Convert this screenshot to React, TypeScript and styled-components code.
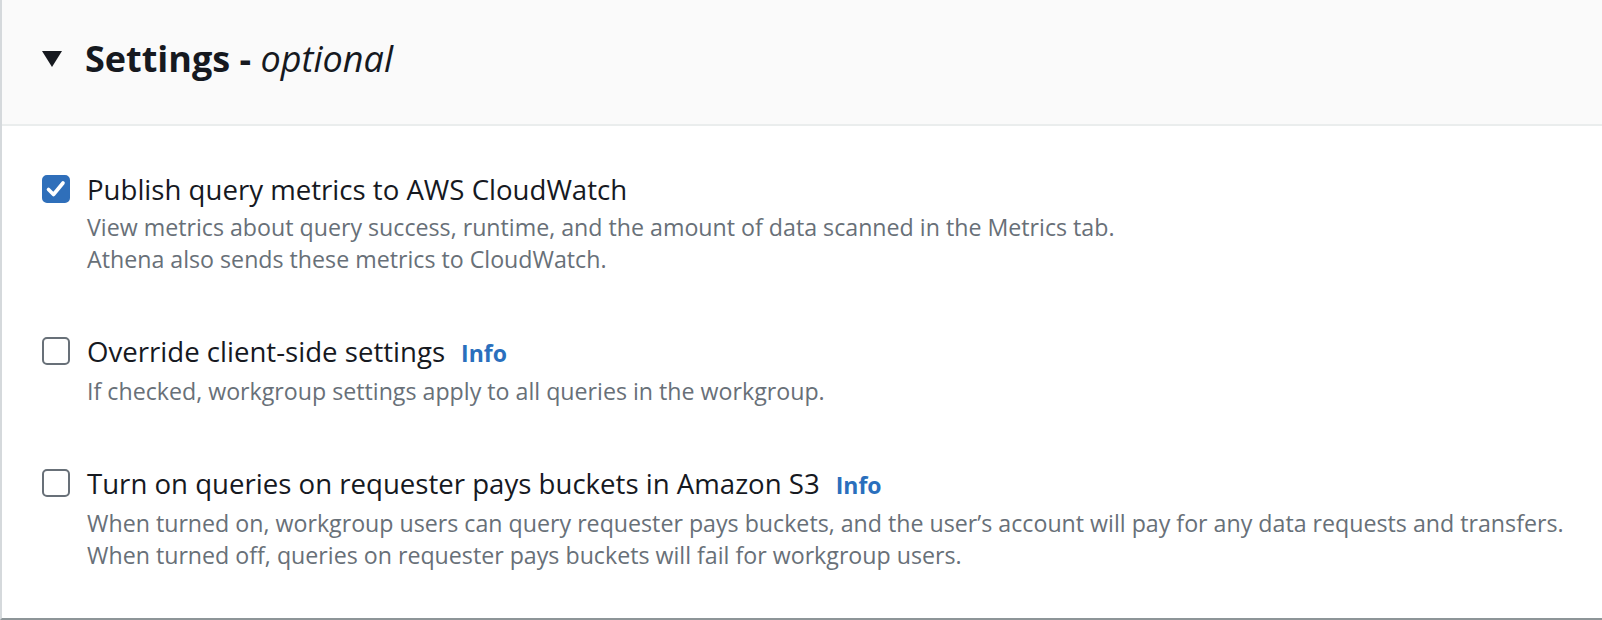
import React from "react";
import styled, { createGlobalStyle } from "styled-components";

const GlobalStyle = createGlobalStyle`
  html, body { margin: 0; padding: 0; background: #ffffff; }
  body { font-family: "Open Sans", "Noto Sans", sans-serif; color: #16191f; }
`;

const Container = styled.section`
  box-sizing: border-box;
  width: 100%;
  height: 620px;
  border-left: 2px solid #d5d9dc;
  border-bottom: 2px solid #8d9598;
  background: #ffffff;
  display: flex;
  flex-direction: column;
`;

const Header = styled.header`
  box-sizing: border-box;
  height: 126px;
  background: #fafafa;
  border-bottom: 2px solid #eaeded;
  display: flex;
  align-items: center;
  padding: 0 0 6px 40px;
  gap: 23px;
`;

const Caret = styled.svg`
  width: 20px;
  height: 16px;
  flex: none;
`;

const Heading = styled.h2`
  margin: 0;
  font-size: 36px;
  font-weight: 700;
  line-height: 44px;
  color: #16191f;
`;

const Optional = styled.em`
  font-weight: 400;
  font-style: italic;
`;

const Body = styled.div`
  display: flex;
  flex-direction: column;
  gap: 54px;
  padding: 41px 0 0 40px;
`;

const Item = styled.div`
  display: grid;
  grid-template-columns: 28px 1fr;
  column-gap: 17px;
`;

const Box = styled.span<{ $checked?: boolean }>`
  box-sizing: border-box;
  width: 28px;
  height: 28px;
  margin-top: 8px;
  border-radius: 5px;
  border: 2px solid ${(p) => (p.$checked ? "#2f6fba" : "#687078")};
  background: ${(p) => (p.$checked ? "#2f6fba" : "#ffffff")};
  display: flex;
  align-items: center;
  justify-content: center;
`;

const Texts = styled.div`
  display: flex;
  flex-direction: column;
`;

const Label = styled.div`
  font-size: 27.6px;
  line-height: 44px;
  color: #16191f;
  display: flex;
  align-items: baseline;
  gap: 16px;
  white-space: nowrap;
`;

const Info = styled.a`
  font-size: 23px;
  font-weight: 700;
  color: #2a6fbd;
  text-decoration: none;
`;

const Desc = styled.div`
  font-size: 23.2px;
  line-height: 32px;
  color: #687078;
  white-space: nowrap;
`;

type Opt = { label: string; info?: boolean; checked?: boolean; desc: string[] };

const options: Opt[] = [
  {
    label: "Publish query metrics to AWS CloudWatch",
    checked: true,
    desc: [
      "View metrics about query success, runtime, and the amount of data scanned in the Metrics tab.",
      "Athena also sends these metrics to CloudWatch.",
    ],
  },
  {
    label: "Override client-side settings",
    info: true,
    desc: ["If checked, workgroup settings apply to all queries in the workgroup."],
  },
  {
    label: "Turn on queries on requester pays buckets in Amazon S3",
    info: true,
    desc: [
      "When turned on, workgroup users can query requester pays buckets, and the user\u2019s account will pay for any data requests and transfers.",
      "When turned off, queries on requester pays buckets will fail for workgroup users.",
    ],
  },
];

export default function App() {
  return (
    <>
      <GlobalStyle />
      <Container>
        <Header>
          <Caret viewBox="0 0 20 16">
            <polygon points="0,0 20,0 10,16" fill="#16191f" />
          </Caret>
          <Heading>
            Settings - <Optional>optional</Optional>
          </Heading>
        </Header>
        <Body>
          {options.map((o) => (
            <Item key={o.label}>
              <Box $checked={o.checked}>
                {o.checked && (
                  <svg width="24" height="24" viewBox="0 0 24 24">
                    <polyline
                      points="4.5,12.5 9.5,17.5 19,6"
                      fill="none"
                      stroke="#ffffff"
                      strokeWidth="3.6"
                      strokeLinecap="round"
                      strokeLinejoin="round"
                    />
                  </svg>
                )}
              </Box>
              <Texts>
                <Label>
                  <span>{o.label}</span>
                  {o.info && <Info href="#">Info</Info>}
                </Label>
                {o.desc.map((d) => (
                  <Desc key={d}>{d}</Desc>
                ))}
              </Texts>
            </Item>
          ))}
        </Body>
      </Container>
    </>
  );
}
